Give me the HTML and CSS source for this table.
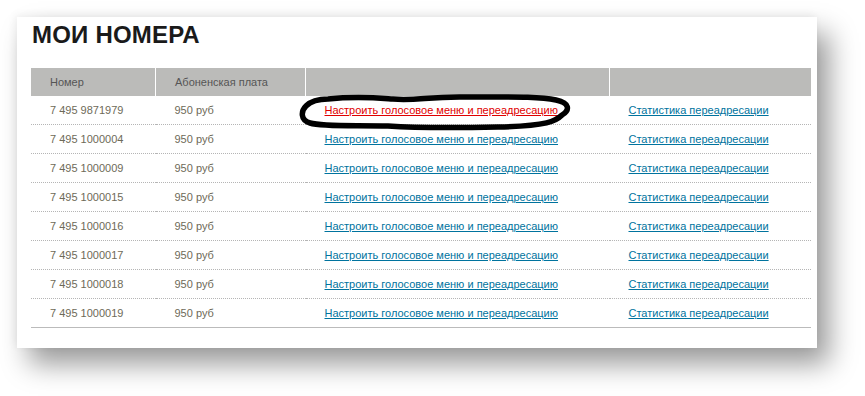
FILE: index.html
```html
<!DOCTYPE html>
<html lang="ru">
<head>
<meta charset="utf-8">
<link rel="stylesheet" href="styles.css">
</head>
<body>
<div class="panel">
  <h1 class="title">МОИ НОМЕРА</h1>
  <table class="numbers">
    <thead>
      <tr><th class="c1">Номер</th><th class="c2">Абоненская плата</th><th class="c3"></th><th class="c4"></th></tr>
    </thead>
    <tbody>
      <tr><td>7 495 9871979</td><td>950 руб</td><td class="marked"><a href="#" class="red">Настроить голосовое меню и переадресацию</a>
        <svg class="scribble" width="278" height="40" viewBox="0 0 278 40"><path d="M30 6 C60 3 80 5 95 6 C120 8 130 3 170 4 C210 4 240 3 258 7 C272 10 272 17 264 22 C258 28 250 33 200 34 C150 35 120 35 90 33 C60 32 25 34 12 30 C2 27 3 18 8 13 C14 7 22 6 30 6 Z" fill="none" stroke="#000" stroke-width="5.5" stroke-linejoin="round"/></svg></td><td><a href="#">Статистика переадресации</a></td></tr>
      <tr><td>7 495 1000004</td><td>950 руб</td><td><a href="#">Настроить голосовое меню и переадресацию</a></td><td><a href="#">Статистика переадресации</a></td></tr>
      <tr><td>7 495 1000009</td><td>950 руб</td><td><a href="#">Настроить голосовое меню и переадресацию</a></td><td><a href="#">Статистика переадресации</a></td></tr>
      <tr><td>7 495 1000015</td><td>950 руб</td><td><a href="#">Настроить голосовое меню и переадресацию</a></td><td><a href="#">Статистика переадресации</a></td></tr>
      <tr><td>7 495 1000016</td><td>950 руб</td><td><a href="#">Настроить голосовое меню и переадресацию</a></td><td><a href="#">Статистика переадресации</a></td></tr>
      <tr><td>7 495 1000017</td><td>950 руб</td><td><a href="#">Настроить голосовое меню и переадресацию</a></td><td><a href="#">Статистика переадресации</a></td></tr>
      <tr><td>7 495 1000018</td><td>950 руб</td><td><a href="#">Настроить голосовое меню и переадресацию</a></td><td><a href="#">Статистика переадресации</a></td></tr>
      <tr class="last"><td>7 495 1000019</td><td>950 руб</td><td><a href="#">Настроить голосовое меню и переадресацию</a></td><td><a href="#">Статистика переадресации</a></td></tr>
    </tbody>
  </table>
</div>
</body>
</html>
```
FILE: styles.css
```css
html, body { margin: 0; padding: 0; background: #fff; }
html { height: 100%; }
body { padding: 17px 0 48px 17px; min-height: 100%; box-sizing: border-box; font-family: "Liberation Sans", Arial, sans-serif; }
.panel {
  width: 800px;
  height: 331px;
  box-sizing: border-box;
  background: #fff;
  padding: 0 6px 0 14px;
  box-shadow: 12px 16px 26px rgba(0,0,0,0.4), -2px -2px 8px rgba(0,0,0,0.06);
}
.title {
  margin: 0;
  padding: 3px 0 0 1px;
  height: 46px;
  box-sizing: border-box;
  font-size: 24px;
  font-weight: bold;
  color: #1a1a1a;
  line-height: 30px;
  letter-spacing: 0.2px;
}
.numbers {
  margin-top: 5px;
  width: 780px;
  border-collapse: collapse;
  font-size: 11px;
  table-layout: fixed;
}
.numbers th {
  background: #bbbbb9;
  height: 28px;
  padding: 0 0 0 19px;
  text-align: left;
  font-weight: normal;
  color: #555;
  border-left: 1px solid #fff;
}
.numbers th:first-child { border-left: none; }
.c1 { width: 105px; }
.c2 { width: 130px; }
.c3 { width: 284px; }
.numbers td {
  height: 28px;
  padding: 0 0 0 19px;
  color: #6e6a58;
  border-bottom: 1px dotted #b5b5b5;
  white-space: nowrap;
}
.numbers tr.last td { border-bottom: 1px solid #bbb; }
.numbers a { color: #00739e; text-decoration: underline; }
.numbers a.red { color: #e00000; }
.marked { position: relative; }
.scribble { position: absolute; left: -8px; top: -3px; }
```
